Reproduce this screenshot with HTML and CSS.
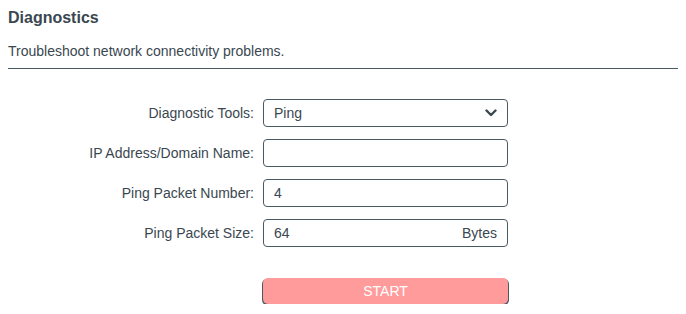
FILE: index.html
```html
<!DOCTYPE html>
<html lang="en">
<head>
  <meta charset="UTF-8">
  <title>Diagnostics</title>
  <link rel="stylesheet" href="styles.css">
</head>
<body>
  <div class="page">
    <div class="header">
      <h1>Diagnostics</h1>
      <p>Troubleshoot network connectivity problems.</p>
    </div>

    <form class="diag-form">
      <label for="tool">Diagnostic Tools:</label>
      <div class="field select">
        <span id="tool">Ping</span>
        <svg width="12" height="8" viewBox="0 0 12 8">
          <path d="M1.5 1.5 L6 6 L10.5 1.5" fill="none" stroke="#3a4750" stroke-width="2.4" stroke-linecap="round" stroke-linejoin="round"/>
        </svg>
      </div>

      <label for="host">IP Address/Domain Name:</label>
      <input class="field" id="host" type="text">

      <label for="count">Ping Packet Number:</label>
      <input class="field" id="count" type="text" value="4">

      <label for="size">Ping Packet Size:</label>
      <div class="field with-unit">
        <input id="size" type="text" value="64">
        <span class="unit">Bytes</span>
      </div>

      <div></div>
      <button type="button" class="button" disabled>START</button>
    </form>
  </div>
</body>
</html>
```

FILE: styles.css
```css
:root {
  --text-color: #3a4750;
  --border-color: #4a5a63;
  --start-color: #ff9b9b;
}

* {
  box-sizing: border-box;
  margin: 0;
  padding: 0;
  font-family: 'Liberation Sans', Arial, sans-serif;
}

body {
  background-color: white;
  color: var(--text-color);
}

.page {
  padding: 0 8px;
}

.header {
  padding-top: 8px;
  padding-bottom: 9px;
  border-bottom: 1px solid var(--border-color);
}

.header h1 {
  font-size: 16px;
  line-height: 19px;
  font-weight: bold;
  margin-bottom: 16px;
}

.header p {
  font-size: 14px;
  line-height: 16px;
}

.diag-form {
  display: grid;
  grid-template-columns: 246px 245px;
  column-gap: 9px;
  row-gap: 12px;
  margin-top: 30px;
}

.diag-form label {
  font-size: 14px;
  text-align: right;
  align-self: center;
}

.field {
  height: 28px;
  border: 1px solid var(--border-color);
  border-radius: 4px;
  padding: 0 10px;
  font-size: 14px;
  color: var(--text-color);
  background: white;
  outline: none;
}

.select {
  display: flex;
  align-items: center;
  justify-content: space-between;
}

.with-unit {
  display: flex;
  align-items: center;
}

.with-unit input {
  flex: 1;
  border: none;
  outline: none;
  font-size: 14px;
  color: var(--text-color);
  min-width: 0;
}

.button {
  margin-top: 19px;
  height: 26px;
  background-color: var(--start-color);
  color: white;
  border: none;
  border-radius: 5px;
  font-size: 14px;
  box-shadow: 0 2px 0 var(--border-color), -1px 1px 0 var(--border-color), 1px 1px 0 var(--border-color);
}
```
